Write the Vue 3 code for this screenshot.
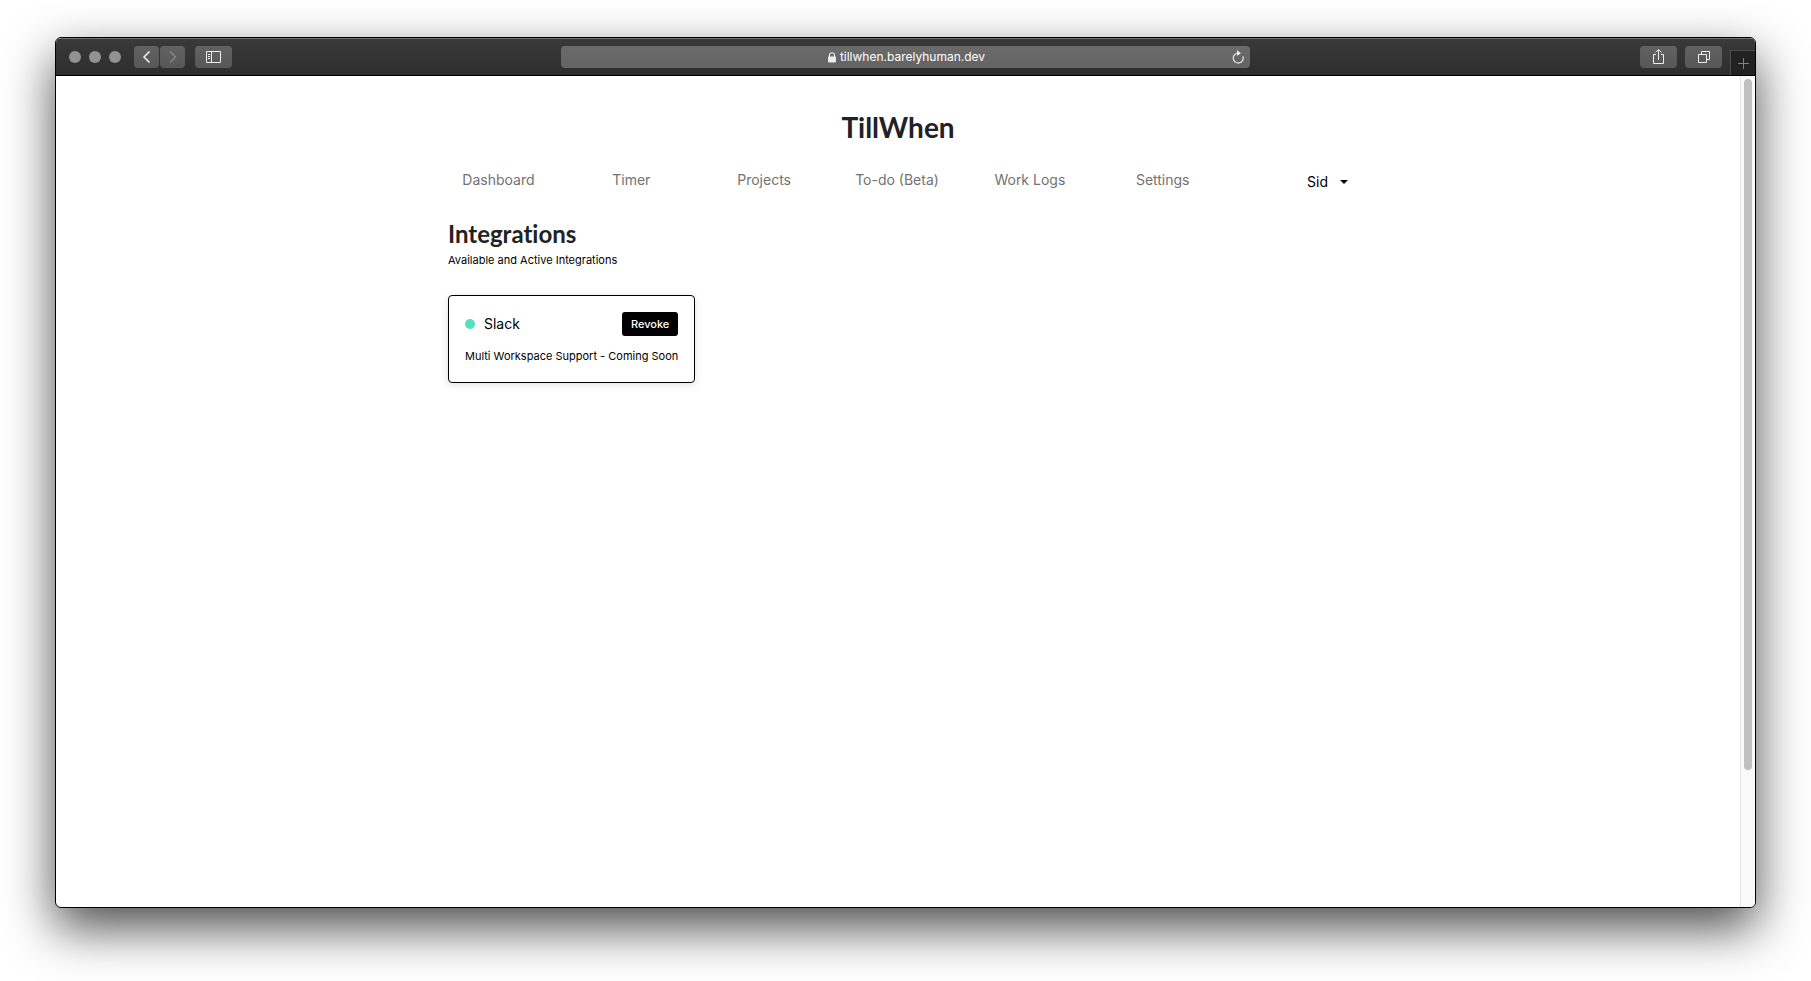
<script setup>
const links = ['Dashboard', 'Timer', 'Projects', 'To-do (Beta)', 'Work Logs', 'Settings']
</script>

<template>
  <div class="desktop">
    <div class="window">
      <header class="toolbar">
        <div class="side">
          <div class="lights"><span></span><span></span><span></span></div>
          <div class="history">
            <button class="tool small" type="button" aria-label="Back">
              <svg width="25" height="22" viewBox="0 0 25 22"><path d="M15.500 5.500 10 11l5.500 5.500" fill="none" stroke="#f2f2f2" stroke-width="1.500" /></svg>
            </button>
            <button class="tool small" type="button" aria-label="Forward">
              <svg width="25" height="22" viewBox="0 0 25 22"><path d="M10 5.500 15.500 11 10 16.500" fill="none" stroke="#858585" stroke-width="1.500" /></svg>
            </button>
          </div>
          <button class="tool" type="button" aria-label="Show sidebar">
            <svg width="37" height="22" viewBox="0 0 37 22" fill="none" stroke="#ededed">
              <path d="M11.500 5.500h14v11h-14zM16.500 5.500v11M13 8.500h2M13 10.500h2M13 12.500h2" />
            </svg>
          </button>
        </div>
        <div class="address">
          <span class="site">
            <svg width="8" height="11" viewBox="0 0 8 11"><rect y="4.500" width="8" height="6" rx="1" fill="#ededed" /><path d="M1.500 5V3.200a2.500 2.500 0 0 1 5 0V5" fill="none" stroke="#ededed" stroke-width="1.100" /></svg>
            <span>tillwhen.barelyhuman.dev</span>
          </span>
          <button class="reload" type="button" aria-label="Reload">
            <svg width="14" height="14" viewBox="0 0 14 14"><path d="M11.900 6.200A5 5 0 1 1 7.800 3.100" fill="none" stroke="#dedede" stroke-width="1.300" /><path d="M6 .3 10 3.200 6 5.800z" fill="#ededed" /></svg>
          </button>
        </div>
        <div class="side end">
          <button class="tool" type="button" aria-label="Share">
            <svg width="37" height="22" viewBox="0 0 37 22" fill="none" stroke="#ededed">
              <path d="M16 8.500h-2.500v9h10v-9H21M18.500 14V4M15.500 6.500l3-3 3 3" />
            </svg>
          </button>
          <button class="tool" type="button" aria-label="Show tabs">
            <svg width="37" height="22" viewBox="0 0 37 22" fill="none" stroke="#ededed">
              <path d="M13.500 8.500h8v8h-8zM16.500 8V5.500h8v8H22" />
            </svg>
          </button>
          <button class="newtab" type="button" aria-label="New tab">
            <svg width="11" height="11" viewBox="0 0 11 11" stroke="#808080"><path d="M5.500 0v11M0 5.500h11" /></svg>
          </button>
        </div>
      </header>

      <div class="viewport">
        <div class="page">
          <div class="container">
            <h1>TillWhen</h1>
            <nav>
              <a v-for="link in links" :key="link" href="#">{{ link }}</a>
              <button class="user" type="button">
                Sid
                <svg width="8" height="4" viewBox="0 0 8 4"><path d="M0 0h8L4 4z" /></svg>
              </button>
            </nav>
            <main>
              <h2>Integrations</h2>
              <p class="note">Available and Active Integrations</p>
              <section class="card">
                <div class="row">
                  <span class="dot"></span>
                  <span class="name">Slack</span>
                  <button class="revoke" type="button">Revoke</button>
                </div>
                <p class="note">Multi Workspace Support - Coming Soon</p>
              </section>
            </main>
          </div>
        </div>
        <div class="track"><div class="thumb"></div></div>
      </div>
    </div>
  </div>
</template>

<style>
body {
  background: #fff;
}
</style>

<style scoped>
* {
  box-sizing: border-box;
}
button {
  border: 0;
  padding: 0;
  font: inherit;
}
svg {
  display: block;
}
.desktop {
  display: flex;
  min-height: 100vh;
  padding: 37px 55px 73px;
  font-family: Inter, "Liberation Sans", sans-serif;
  overflow: hidden;
}
.window {
  flex: 1;
  display: flex;
  flex-direction: column;
  min-width: 0;
  border: 1px solid #000;
  border-radius: 6px;
  background: #fff;
  overflow: hidden;
  box-shadow: 0 20px 50px rgba(0, 0, 0, 0.7);
}
.toolbar {
  display: flex;
  align-items: center;
  height: 38px;
  border-top: 1px solid #717171;
  border-bottom: 1px solid #000;
  background: linear-gradient(#3a3a3a, #2d2d2d);
}
.side {
  flex: 1;
  display: flex;
  align-items: center;
  height: 100%;
}
.end {
  justify-content: flex-end;
  gap: 8px;
}
.lights {
  display: flex;
  gap: 8px;
  margin-left: 13px;
}
.lights span {
  width: 12px;
  height: 12px;
  border-radius: 50%;
  background: #929292;
}
.history {
  display: flex;
  gap: 1px;
  margin: 0 10px 0 13px;
}
.tool {
  width: 37px;
  height: 22px;
  border-radius: 4px;
  background: linear-gradient(#626262, #575757);
}
.small {
  width: 25px;
}
.address {
  flex: 0 1 689px;
  display: flex;
  align-items: center;
  height: 22px;
  padding: 0 5px 0 21px;
  border-radius: 4px;
  background: linear-gradient(#6b6b6b, #636363);
  color: #fff;
  font-size: 12px;
  line-height: 22px;
}
.site {
  flex: 1;
  display: flex;
  align-items: center;
  justify-content: center;
  gap: 4px;
}
.reload {
  background: none;
}
.newtab {
  display: flex;
  align-items: center;
  justify-content: center;
  align-self: flex-end;
  width: 25px;
  height: 25px;
  border: 1px solid #4b4b4b;
  border-width: 1px 0 0 1px;
  background: #222;
}
.viewport {
  flex: 1;
  display: flex;
}
.page {
  flex: 1;
  min-width: 0;
}
.container {
  max-width: 900px;
  margin: 0 auto;
  padding-top: 33px;
}
h1,
h2 {
  margin: 0;
  color: #222;
  font-family: Lato, sans-serif;
  font-weight: 700;
  font-variant-ligatures: none;
}
h1 {
  font-size: 28px;
  line-height: 36px;
  text-align: center;
}
nav {
  display: grid;
  grid-template-columns: repeat(7, 1fr);
  margin: 23px -14px 0 -16px;
  font-size: 14px;
  line-height: 24px;
}
nav a {
  color: #727272;
  text-align: center;
  text-decoration: none;
}
.user {
  display: flex;
  align-items: center;
  justify-content: flex-end;
  gap: 12px;
  padding: 2px 14px 0 0;
  background: none;
  color: #000;
}
main {
  margin-top: 24px;
}
h2 {
  font-size: 24px;
  line-height: 32px;
}
.note {
  margin: 0;
  font-size: 11px;
  line-height: 20px;
}
.card {
  width: fit-content;
  margin-top: 25px;
  padding: 16px;
  border: 1px solid #000;
  border-radius: 4px;
  box-shadow: 0 2px 8px rgba(0, 0, 0, 0.12);
}
.row {
  display: flex;
  align-items: center;
  margin-bottom: 10px;
}
.dot {
  width: 10px;
  height: 10px;
  border-radius: 50%;
  background: #56dfbd;
}
.name {
  flex: 1;
  margin-left: 9px;
  font-size: 14px;
  line-height: 24px;
}
.revoke {
  height: 24px;
  padding: 0 9px;
  border-radius: 3px;
  background: #000;
  color: #fff;
  font-size: 11px;
  font-weight: 500;
}
.track {
  width: 15px;
  padding: 3px 3px 0;
  border-left: 1px solid #e6e6e6;
  background: #f9f9f9;
}
.thumb {
  width: 8px;
  height: 83.500%;
  border-radius: 4px;
  background: #c1c1c1;
}
</style>
